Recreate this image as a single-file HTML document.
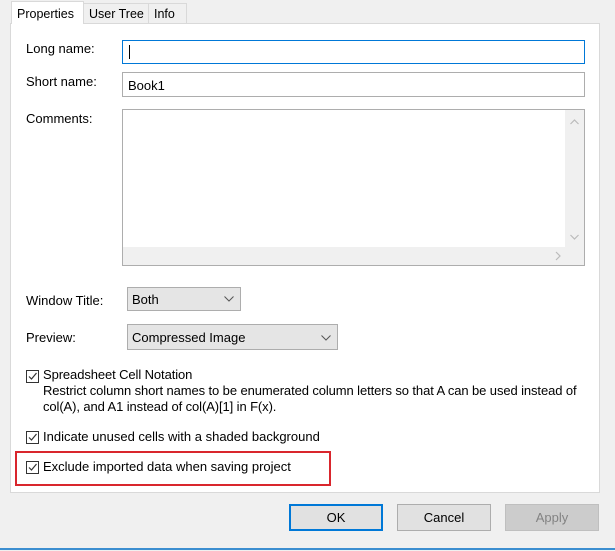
<!DOCTYPE html>
<html><head><style>
*{box-sizing:border-box;margin:0;padding:0}
body{width:615px;height:551px;background:#f0f0f0;font-family:"Liberation Sans",sans-serif;font-size:13px;color:#000;position:relative;overflow:hidden}
.a{position:absolute}
.tab{position:absolute;top:3px;height:20px;border:1px solid #d9d9d9;border-bottom:none;background:#f0f0f0;padding:3px 0 0 5px;font-size:12.5px}
.inp{position:absolute;background:#fff;border:1px solid #adadad}
.cb{position:absolute;width:13px;height:13px;border:1px solid #333;background:#fff}
.cb svg{position:absolute;left:0;top:0}
.btn{position:absolute;top:504px;height:27px;width:94px;border:1px solid #adadad;background:#e1e1e1;text-align:center;line-height:25px}
.sel{position:absolute;background:#e5e5e5;border:1px solid #adadad;padding:4px 0 0 4px}
</style></head><body>
<div class="a" style="left:10px;top:23px;width:590px;height:470px;background:#fff;border:1px solid #d9d9d9"></div>
<div class="tab" style="left:83px;width:66px">User Tree</div>
<div class="tab" style="left:148px;width:39px">Info</div>
<div class="tab" style="left:11px;top:1px;width:73px;height:23px;background:#fff;padding-top:5px">Properties</div>

<div class="a" style="left:26px;top:41px">Long name:</div>
<div class="inp" style="left:122px;top:40px;width:463px;height:24px;border-color:#0078d7"><div class="a" style="left:6px;top:4px;width:1px;height:14px;background:#000"></div></div>
<div class="a" style="left:26px;top:74px">Short name:</div>
<div class="inp" style="left:122px;top:72px;width:463px;height:25px;padding:5px 0 0 5px">Book1</div>
<div class="a" style="left:26px;top:111px">Comments:</div>
<div class="inp" style="left:122px;top:109px;width:463px;height:157px">
 <div class="a" style="right:0;top:0;width:19px;height:137px;background:#f0f0f0"></div>
 <div class="a" style="left:0;bottom:0;width:461px;height:18px;background:#f0f0f0"></div>
 <svg class="a" style="right:0;top:0" width="19" height="155"><path d="M5.5 14 L9.5 10 L13.5 14" stroke="#bbb" fill="none" stroke-width="1.2"/><path d="M5.5 125 L9.5 129 L13.5 125" stroke="#bbb" fill="none" stroke-width="1.2"/></svg>
 <svg class="a" style="left:425px;bottom:0" width="20" height="18"><path d="M8 5 L12 9 L8 13" stroke="#bbb" fill="none" stroke-width="1.2"/></svg>
</div>

<div class="a" style="left:26px;top:293px">Window Title:</div>
<div class="sel" style="left:127px;top:287px;width:114px;height:24px">Both<svg class="a" style="right:6px;top:8px" width="10" height="6"><path d="M0.5 0.5 L5 5 L9.5 0.5" stroke="#555" fill="none"/></svg></div>
<div class="a" style="left:26px;top:330px">Preview:</div>
<div class="sel" style="left:127px;top:324px;width:211px;height:26px;padding-top:5px">Compressed Image<svg class="a" style="right:6px;top:10px" width="10" height="6"><path d="M0.5 0.5 L5 5 L9.5 0.5" stroke="#555" fill="none"/></svg></div>

<div class="cb" style="left:26px;top:370px"><svg width="11" height="11"><path d="M2 5.5 L4.5 8 L9.5 2" stroke="#333" fill="none" stroke-width="1.2"/></svg></div>
<div class="a" style="left:43px;top:367px;line-height:16px;white-space:nowrap;letter-spacing:-0.1px">Spreadsheet Cell Notation<br>Restrict column short names to be enumerated column letters so that A can be used instead of<br>col(A), and A1 instead of col(A)[1] in F(x).</div>
<div class="cb" style="left:26px;top:431px"><svg width="11" height="11"><path d="M2 5.5 L4.5 8 L9.5 2" stroke="#333" fill="none" stroke-width="1.2"/></svg></div>
<div class="a" style="left:43px;top:429px">Indicate unused cells with a shaded background</div>
<div class="a" style="left:15px;top:451px;width:316px;height:35px;border:2px solid #d9262d"></div>
<div class="cb" style="left:26px;top:461px"><svg width="11" height="11"><path d="M2 5.5 L4.5 8 L9.5 2" stroke="#333" fill="none" stroke-width="1.2"/></svg></div>
<div class="a" style="left:43px;top:459px">Exclude imported data when saving project</div>

<div class="btn" style="left:289px;border:2px solid #0078d7;line-height:23px">OK</div>
<div class="btn" style="left:397px">Cancel</div>
<div class="btn" style="left:505px;background:#ccc;border-color:#bfbfbf;color:#838383">Apply</div>
<div class="a" style="left:0;top:548px;width:615px;height:2px;background:#3c8ed0"></div>
</body></html>
